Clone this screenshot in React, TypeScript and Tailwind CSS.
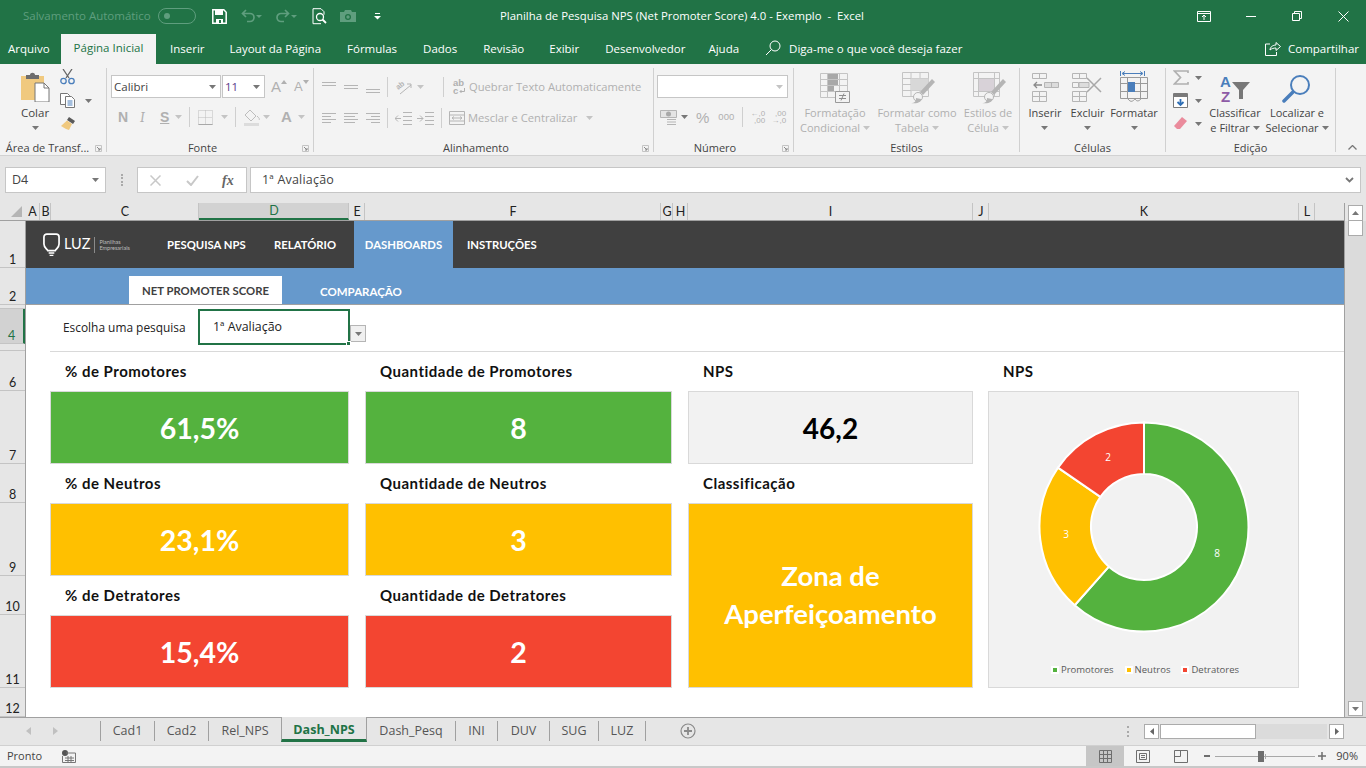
import type { ReactNode } from "react";

const GREEN = "#217346";
const DIM = "#b5b5b5";

function Caret({ color = "#777777", className = "" }: { color?: string; className?: string }) {
  return (
    <svg width="7" height="4" viewBox="0 0 7 4" className={className}>
      <path d="M0 0h7L3.5 4z" fill={color} />
    </svg>
  );
}

function Launcher() {
  return (
    <svg width="7" height="7" viewBox="0 0 7 7" className="shrink-0">
      <path d="M.5.5h6v6h-6z" fill="none" stroke="#c4c4c4" />
      <path d="M2 2l3 3M5 3v2H3" fill="none" stroke="#8a8a8a" />
    </svg>
  );
}

function VSep({ h = 20, className = "" }: { h?: number; className?: string }) {
  return <div className={`w-px bg-[#cfcfcf] shrink-0 ${className}`} style={{ height: h }} />;
}

function Group({
  width,
  label,
  launcher,
  pad = 8,
  children,
}: {
  width: number;
  label: string;
  launcher?: boolean;
  pad?: number;
  children: ReactNode;
}) {
  return (
    <div className="flex flex-col border-r border-[#d0d0d0] shrink-0 mt-[4px]" style={{ width, height: 84 }}>
      <div className="h-[73px] shrink-0 flex">{children}</div>
      <div className="h-[14px] shrink-0 flex items-center px-1">
        <span className="flex-1 text-center text-[11px] text-[#444444] whitespace-nowrap" style={{ paddingRight: launcher ? pad : 0 }}>
          {label}
        </span>
        {launcher && <Launcher />}
      </div>
    </div>
  );
}

function Lines({ rows, color = DIM }: { rows: [number, number, number][]; color?: string }) {
  return (
    <svg width="16" height="14" viewBox="0 0 16 14">
      {rows.map(([y, x1, x2], i) => (
        <path key={i} d={`M${x1} ${y + 0.5}H${x2}`} stroke={color} />
      ))}
    </svg>
  );
}

function BigLabelled({
  width,
  lines,
  icon,
  dim,
  caretInline,
}: {
  width: number;
  lines: string[];
  icon: ReactNode;
  dim?: boolean;
  caretInline?: boolean;
}) {
  const color = dim ? "text-[#b0b0b0]" : "text-[#444444]";
  return (
    <div className="flex flex-col items-center shrink-0" style={{ width }}>
      <div className="h-[33px] shrink-0 flex items-center justify-center">{icon}</div>
      <div className={`text-[11px] leading-[15px] text-center whitespace-nowrap mt-[1px] ${color}`}>
        <div>{lines[0]}</div>
        {lines[1] ? (
          <div className="flex items-center justify-center gap-[3px]">
            {lines[1]}
            {caretInline && <Caret color={dim ? "#c4c4c4" : "#777777"} />}
          </div>
        ) : (
          <div className="h-[15px] flex items-center justify-center">
            <Caret />
          </div>
        )}
      </div>
    </div>
  );
}

function TitleBar() {
  return (
    <div className="h-[35px] flex items-center text-white relative text-[11px] pb-[3px]">
      <span className="ml-[23px] text-[#5f9e7e] text-[11.5px]">Salvamento Automático</span>
      <div className="ml-[7px] w-[38px] h-[16px] rounded-full border border-[#5f9e7e] flex items-center pl-[5px]">
        <div className="w-[6px] h-[6px] rounded-full bg-[#5f9e7e]" />
      </div>
      <svg width="15" height="15" viewBox="0 0 15 15" className="ml-[16px]">
        <path d="M.8.8h11l2.4 2.4v11H.8z" fill="none" stroke="#fff" strokeWidth="1.5" />
        <path d="M3 1h8v5H3zM4 10h7v4H4z" fill="#fff" />
        <path d="M7 11h2v3H7z" fill={GREEN} />
      </svg>
      <svg width="21" height="14" viewBox="0 0 21 14" className="ml-[14px]">
        <path d="M5 1L1.500 4.500 5 8M2 4.500h7a4 4 0 0 1 0 8H6" fill="none" stroke="#5f9e7e" strokeWidth="1.700" />
        <path d="M15 6h6l-3 3z" fill="#5f9e7e" />
      </svg>
      <svg width="21" height="14" viewBox="0 0 21 14" className="ml-[14px]">
        <path d="M9 1l3.500 3.500L9 8M12 4.500H5a4 4 0 0 0 0 8h3" fill="none" stroke="#5f9e7e" strokeWidth="1.700" />
        <path d="M15 6h6l-3 3z" fill="#5f9e7e" />
      </svg>
      <svg width="15" height="17" viewBox="0 0 15 17" className="ml-[15px]">
        <path d="M9 .7H1v15h8M9 .7l3 3v3" fill="none" stroke="#fff" />
        <circle cx="8" cy="9" r="3.500" fill={GREEN} stroke="#fff" strokeWidth="1.300" />
        <path d="M10.500 11.500l3.500 3.500" stroke="#fff" strokeWidth="1.800" />
      </svg>
      <svg width="16" height="12" viewBox="0 0 16 12" className="ml-[13px]">
        <path d="M0 2h4l1-2h6l1 2h4v10H0z" fill="#5f9e7e" />
        <circle cx="8" cy="7" r="3" fill={GREEN} />
        <circle cx="8" cy="7" r="1.700" fill="#5f9e7e" />
      </svg>
      <svg width="7" height="7" viewBox="0 0 7 7" className="ml-[18px]">
        <path d="M1 .5h5" stroke="#fff" />
        <path d="M0 3h7L3.500 6.500z" fill="#fff" />
      </svg>
      <span className="absolute left-[500px] text-[11.35px] whitespace-pre">
        Planilha de Pesquisa NPS (Net Promoter Score) 4.0 - Exemplo  -  Excel
      </span>
      <div className="ml-auto flex items-center">
        <svg width="14" height="11" viewBox="0 0 14 11">
          <path d="M.5 .5h13v10H.5zM.5 2.500h13" fill="none" stroke="#fff" />
          <path d="M7 9V4.500M5 6l2-2 2 2" fill="none" stroke="#fff" />
        </svg>
        <div className="ml-[35px] w-[10px] h-px bg-white" />
        <svg width="10" height="10" viewBox="0 0 10 10" className="ml-[36px]">
          <path d="M.5 2.500h7v7h-7zM2.500 2.500v-2h7v7h-2" fill="none" stroke="#fff" />
        </svg>
        <svg width="11" height="11" viewBox="0 0 11 11" className="ml-[36px] mr-[17px]">
          <path d="M.5 .5l10 10M10.500 .5l-10 10" stroke="#fff" />
        </svg>
      </div>
    </div>
  );
}

function MenuBar() {
  const tabs: [string, number][] = [
    ["Inserir", 14],
    ["Layout da Página", 25],
    ["Fórmulas", 26],
    ["Dados", 26],
    ["Revisão", 26],
    ["Exibir", 25],
    ["Desenvolvedor", 26],
    ["Ajuda", 23],
  ];
  return (
    <div className="h-[29px] flex items-end text-white text-[11.5px]">
      <span className="ml-[8px] w-[53px] h-[24px] leading-[17px]">Arquivo</span>
      <div className="w-[95px] h-[30px] bg-[#f3f3f3] text-[#217346] flex items-center justify-center pb-[2px]">
        Página Inicial
      </div>
      {tabs.map(([t, ml]) => (
        <span key={t} className="h-[24px] leading-[17px] whitespace-nowrap" style={{ marginLeft: ml }}>
          {t}
        </span>
      ))}
      <svg width="16" height="16" viewBox="0 0 16 16" className="ml-[26px] mb-[8px]">
        <circle cx="10" cy="6" r="5" fill="none" stroke="#fff" />
        <path d="M6.500 9.500L1 15" stroke="#fff" />
      </svg>
      <span className="ml-[8px] h-[24px] leading-[17px]">Diga-me o que você deseja fazer</span>
      <div className="ml-auto flex items-center h-[17px] mb-[7px] mr-[7px]">
        <svg width="16" height="15" viewBox="0 0 16 15" className="mr-[7px]">
          <path d="M5 3H.5v11.500h11V11" fill="none" stroke="#fff" />
          <path d="M5 9c0-3 3-5 6-5V1.500l4.500 4-4.500 4V7C9 7 6.500 7.500 5 9z" fill="none" stroke="#fff" />
        </svg>
        <span>Compartilhar</span>
      </div>
    </div>
  );
}

function ClipboardGroup() {
  return (
    <Group width={107} label="Área de Transf..." launcher pad={4}>
      <div className="w-[60px] flex flex-col items-center pl-[10px] pt-[4px]">
        <svg width="30" height="30" viewBox="0 0 30 30" className="shrink-0">
          <path d="M1 4h23v24H1z" fill="#f0c97f" />
          <path d="M6 3h4c0-3 5-3 5 0h4v4H6z" fill="#6d6d6d" />
          <path d="M15 11h9l5 5v14H15z" fill="#fff" stroke="#777" />
          <path d="M24 11v5h5" fill="none" stroke="#777" />
        </svg>
        <span className="text-[11.5px] text-[#444444] mt-[3px] leading-[16px]">Colar</span>
        <Caret className="mt-[5px]" />
      </div>
      <div className="flex flex-col pt-[1px]">
        <svg width="16" height="16" viewBox="0 0 16 16">
          <path d="M3 0l6 9M12 0L6 9" stroke="#666" strokeWidth="1.300" />
          <circle cx="3.500" cy="12" r="2.700" fill="none" stroke="#4a7ebb" strokeWidth="1.300" />
          <circle cx="11.500" cy="12" r="2.700" fill="none" stroke="#4a7ebb" strokeWidth="1.300" />
        </svg>
        <div className="flex items-center mt-[8px]">
          <svg width="16" height="15" viewBox="0 0 16 15">
            <path d="M.5.5h7l2 2v9h-9z" fill="#fff" stroke="#777" />
            <path d="M5.500 3.500h6l3 3v8h-9z" fill="#fff" stroke="#777" />
            <path d="M7.500 8h5M7.500 10h5M7.500 12h5" stroke="#4a7ebb" />
          </svg>
          <Caret className="ml-[9px]" />
        </div>
        <svg width="16" height="15" viewBox="0 0 16 15" className="mt-[8px]">
          <path d="M9 1l6 4-2 3-6-4z" fill="#5a5a5a" />
          <path d="M7 4.500L12 8l-3 6-3-1-5-3z" fill="#f0c97f" />
        </svg>
      </div>
    </Group>
  );
}

function Select({ w, value, color = "#444444" }: { w: number; value: string; color?: string }) {
  return (
    <div
      className="h-[23px] bg-white border border-[#c6c6c6] flex items-center justify-between pl-[2px] pr-[4px] text-[11.500px] shrink-0"
      style={{ width: w, color }}
    >
      <span>{value}</span>
      <Caret />
    </div>
  );
}

function FontGroup() {
  return (
    <Group width={207} label="Fonte" launcher>
      <div className="flex flex-col pl-[4px] pt-[7px]">
        <div className="flex items-center">
          <Select w={110} value="Calibri" />
          <div className="w-px" />
          <Select w={43} value="11" color="#5b3a8a" />
          <span className="ml-[6px] text-[15px] font-medium text-[#b0b0b0] leading-none" style={{ fontFamily: "Liberation Sans" }}>
            A
          </span>
          <svg width="6" height="4" viewBox="0 0 6 4" className="mb-[9px]">
            <path d="M0 4h6L3 0z" fill="#b0b0b0" />
          </svg>
          <span className="ml-[7px] text-[13px] text-[#b0b0b0] leading-none" style={{ fontFamily: "Liberation Sans" }}>
            A
          </span>
          <svg width="6" height="4" viewBox="0 0 6 4" className="mb-[9px]">
            <path d="M0 0h6L3 4z" fill="#b0b0b0" />
          </svg>
        </div>
        <div className="flex items-center h-[20px] mt-[9px] text-[#b0b0b0] text-[14px]" style={{ fontFamily: "Liberation Sans" }}>
          <span className="ml-[7px] w-[10px] font-bold">N</span>
          <span className="ml-[12px] w-[8px] italic font-serif">I</span>
          <span className="ml-[12px] w-[9px] font-bold underline">S</span>
          <Caret color="#c4c4c4" className="ml-[6px]" />
          <VSep className="ml-[7px]" />
          <svg width="15" height="15" viewBox="0 0 15 15" className="ml-[8px]">
            <path d="M.5.5h14v14H.5zM7.500 .5v14M.5 7.500h14" fill="none" stroke="#bcbcbc" strokeDasharray="1 1" />
            <path d="M.5 14.500h14" stroke="#a8a8a8" />
          </svg>
          <Caret color="#c4c4c4" className="ml-[8px]" />
          <VSep className="ml-[7px]" />
          <svg width="18" height="17" viewBox="0 0 18 17" className="ml-[7px]">
            <path d="M7 1l6 6-5 5-6-6z" fill="none" stroke="#bdbdbd" />
            <path d="M14 7c2 2 3 3 2 4" fill="none" stroke="#bdbdbd" />
            <path d="M1 14h15v3H1z" fill="#dcdcdc" />
          </svg>
          <Caret color="#c4c4c4" className="ml-[2px]" />
          <span className="ml-[11px] w-[11px] font-bold text-[15px]">A</span>
          <Caret color="#c4c4c4" className="ml-[6px]" />
        </div>
      </div>
    </Group>
  );
}

function AlignGroup() {
  const l = (a: number, b: number) => [a, 1, b] as [number, number, number];
  return (
    <Group width={340} label="Alinhamento" launcher>
      <div className="flex flex-col pl-[7px] pt-[7px]">
        <div className="flex items-center h-[24px]">
          <div className="w-[22px]"><Lines rows={[l(2, 15), l(5, 15)]} /></div>
          <div className="w-[22px]"><Lines rows={[l(5, 15), l(8, 15)]} /></div>
          <div className="w-[22px]"><Lines rows={[l(9, 15), l(12, 15)]} /></div>
          <VSep />
          <svg width="17" height="16" viewBox="0 0 17 16" className="ml-[7px]">
            <text x="1" y="9" fontSize="7.500" fontWeight="700" fill={DIM} transform="rotate(-40 5 7)" style={{ fontFamily: "Liberation Sans" }}>
              ab
            </text>
            <path d="M5 15l11-9M12 5h4v4" fill="none" stroke={DIM} />
          </svg>
          <Caret color="#c4c4c4" className="ml-[5px]" />
          <VSep className="ml-[19px]" />
          <div className="ml-[9px] w-[14px] text-[9.500px] leading-[8px] font-bold text-[#b0b0b0] shrink-0" style={{ fontFamily: "Liberation Sans" }}>
            <div>ab</div>
            <div className="flex items-center">
              c
              <svg width="6" height="6" viewBox="0 0 6 6" className="ml-[1px]">
                <path d="M5.500 0v3.500H1M2.500 2L1 3.500 2.500 5" fill="none" stroke="#b0b0b0" />
              </svg>
            </div>
          </div>
          <span className="text-[11.200px] ml-[2px] text-[#b0b0b0] whitespace-nowrap">Quebrar Texto Automaticamente</span>
        </div>
        <div className="flex items-center h-[24px] mt-[7px]">
          <div className="w-[22px]"><Lines rows={[l(2, 15), l(5, 10), l(8, 15), l(11, 10)]} /></div>
          <div className="w-[22px]"><Lines rows={[l(2, 15), l(5, 12), l(8, 15), l(11, 12)]} /></div>
          <div className="w-[22px]"><Lines rows={[l(2, 15), [5, 6, 15], l(8, 15), [11, 6, 15]]} /></div>
          <VSep />
          <svg width="17" height="13" viewBox="0 0 17 13" className="ml-[7px]">
            <path d="M8 .5h9M8 4.500h9M8 8.500h9M8 12.500h9M0 6.500h6M3 3.500l-3 3 3 3" fill="none" stroke={DIM} />
          </svg>
          <svg width="17" height="13" viewBox="0 0 17 13" className="ml-[5px]">
            <path d="M8 .5h9M8 4.500h9M8 8.500h9M8 12.500h9M0 6.500h6M3 3.500l3 3-3 3" fill="none" stroke={DIM} />
          </svg>
          <VSep className="ml-[7px]" />
          <svg width="16" height="14" viewBox="0 0 16 14" className="ml-[7px]">
            <path d="M.5.5h15v13H.5zM.5 4h15M.5 10h15M3 7h10M5 5.500L3 7l2 1.500M11 5.500L13 7l-2 1.500" fill="none" stroke={DIM} />
          </svg>
          <span className="ml-[3px] text-[11.200px] text-[#b0b0b0] whitespace-nowrap">Mesclar e Centralizar</span>
          <Caret color="#c4c4c4" className="ml-[9px]" />
        </div>
      </div>
      <div className="flex-1" />
    </Group>
  );
}

function NumberGroup() {
  return (
    <Group width={140} label="Número" launcher pad={10}>
      <div className="flex flex-col pl-[3px] pt-[7px]">
        <div className="w-[131px] h-[23px] bg-white border border-[#c6c6c6] flex items-center justify-end pr-[4px]">
          <Caret color="#c4c4c4" />
        </div>
        <div className="flex items-center h-[20px] mt-[9px] text-[#b0b0b0]">
          <svg width="17" height="15" viewBox="0 0 17 15" className="ml-[3px]">
            <path d="M.5.5h16v7H.5z" fill="#e4e4e4" stroke={DIM} />
            <circle cx="8.500" cy="4" r="2.500" fill="#a8a8a8" />
            <path d="M7 9.500h9M7 12h9M7 14.500h9" stroke={DIM} />
          </svg>
          <Caret className="ml-[4px]" />
          <span className="ml-[8px] text-[15px] leading-none" style={{ fontFamily: "Liberation Sans" }}>%</span>
          <span className="ml-[9px] text-[9.500px] leading-none" style={{ fontFamily: "Liberation Sans" }}>000</span>
          <VSep className="ml-[8px]" />
          <div className="ml-[7px] w-[15px] text-[8px] leading-[7px] text-right" style={{ fontFamily: "Liberation Sans" }}>
            ←,0
            <br />
            ,00
          </div>
          <div className="ml-[6px] w-[15px] text-[8px] leading-[7px] text-right" style={{ fontFamily: "Liberation Sans" }}>
            ,00
            <br />
            →,0
          </div>
        </div>
      </div>
    </Group>
  );
}

function TableIcon({ children }: { children: ReactNode }) {
  return (
    <svg width="36" height="33" viewBox="0 0 36 33">
      <path d="M3.500 1.500h26v24h-26zM3.500 7.500h26M3.500 13.500h26M3.500 19.500h26M12 1.500v24M21 1.500v24" fill="none" stroke="#c4c4c4" />
      {children}
    </svg>
  );
}

function Brush() {
  return (
    <g>
      <path d="M36 11L24 24l-3-3 12-13z" fill="#b5b5b5" />
      <circle cx="19" cy="26" r="4.500" fill="#f3f3f3" stroke="#b5b5b5" />
      <path d="M12 32c4 0 5-2 5-5l5 1c0 3-3 5-10 4z" fill="#b5b5b5" />
    </g>
  );
}

function StylesGroup() {
  return (
    <Group width={226} label="Estilos">
      <div className="flex pl-[6px] pt-[3px]">
        <BigLabelled
          width={70}
          dim
          caretInline
          lines={["Formatação", "Condicional"]}
          icon={
            <svg width="30" height="30" viewBox="0 0 30 30">
              <path d="M.5.5h27v24H.5zM.5 6.500h27M.5 12.500h27M.5 18.500h27M7.500.5v24M19.500 .5v24" fill="none" stroke="#c4c4c4" />
              <path d="M8 1h10v5H8zM8 7h10v5H8zM8 13h6v5H8z" fill="#a8a8a8" />
              <path d="M15.500 18.500h14v11h-14z" fill="#f3f3f3" stroke="#9a9a9a" />
              <path d="M19 22.500h7M19 25.500h7M24 20.500l-3 7" stroke="#8f8f8f" />
            </svg>
          }
        />
        <BigLabelled
          width={94}
          dim
          caretInline
          lines={["Formatar como", "Tabela"]}
          icon={
            <TableIcon>
              <path d="M12 7.500h17.500v12H12z" fill="#d8d8d8" />
              <Brush />
            </TableIcon>
          }
        />
        <BigLabelled
          width={48}
          dim
          caretInline
          lines={["Estilos de", "Célula"]}
          icon={
            <svg width="36" height="33" viewBox="0 0 36 33">
              <path d="M3.500 1.500h26v24h-26zM3.500 7.500h26M8.500 1.500v24M24.500 1.500v24M3.500 20.500h26" fill="none" stroke="#c4c4c4" />
              <path d="M9 8h15v12H9z" fill="#d8d2d8" />
              <Brush />
            </svg>
          }
        />
      </div>
    </Group>
  );
}

function CellsGroup() {
  return (
    <Group width={146} label="Células">
      <div className="flex pl-[3px] pt-[3px]">
        <BigLabelled
          width={44}
          lines={["Inserir"]}
          icon={
            <svg width="27" height="29" viewBox="0 0 27 29">
              <path d="M.5.5h14v5H.5zM7.500 .5v5M.5 18.500h14v10H.5zM.5 23.500h14M7.500 18.500v10" fill="none" stroke="#b5b5b5" />
              <path d="M12.500 9.500h14v5h-14zM19.500 9.500v5" fill="#dcdcdc" stroke="#b5b5b5" />
              <path d="M2 12h8M5 9l-3 3 3 3" fill="none" stroke="#8a8a8a" strokeWidth="1.300" />
            </svg>
          }
        />
        <BigLabelled
          width={41}
          lines={["Excluir"]}
          icon={
            <svg width="31" height="29" viewBox="0 0 31 29">
              <path d="M.5.5h14v5H.5zM7.500 .5v5M.5 18.500h14v10H.5zM.5 23.500h14M7.500 18.500v10M.5 9.500h6v5h-6z" fill="none" stroke="#b5b5b5" />
              <path d="M7 9.500h10v5H7z" fill="#dcdcdc" stroke="#b5b5b5" />
              <path d="M15 5l14 14M29 5L15 19" stroke="#a8a8a8" strokeWidth="1.500" />
            </svg>
          }
        />
        <BigLabelled
          width={52}
          lines={["Formatar"]}
          icon={
            <svg width="29" height="33" viewBox="0 0 29 33">
              <path d="M.5 0v5M24.500 0v5M3 2.500h19" stroke="#4a7ebb" />
              <path d="M5 .5L2 2.500l3 2M20 .5l3 2-3 2" fill="none" stroke="#4a7ebb" />
              <path d="M.5 6.500h27v21H.5zM.5 12.500h27M.5 20.500h27M7.500 6.500v21M20.500 6.500v21" fill="none" stroke="#9a9a9a" />
              <path d="M8 11h7v10H8z" fill="#4a7ebb" />
              <path d="M8 28c3 4 5 2 7 0M15 28c2 3 4 2 6 0" fill="none" stroke="#9a9a9a" />
            </svg>
          }
        />
      </div>
    </Group>
  );
}

function EditGroup() {
  return (
    <Group width={170} label="Edição">
      <div className="flex pl-[7px] pt-[3px]">
        <div className="flex flex-col w-[31px] -mt-[1px]">
          <div className="flex items-center h-[15px]">
            <svg width="16" height="15" viewBox="0 0 16 15">
              <path d="M15 3V1H1.500l6 6.500-6 6.500H15v-2" fill="none" stroke="#b0b0b0" strokeWidth="1.700" />
            </svg>
            <Caret className="ml-[6px]" />
          </div>
          <div className="flex items-center h-[15px] mt-[8px]">
            <svg width="15" height="15" viewBox="0 0 15 15">
              <path d="M.5.5h14v14H.5z" fill="#fff" stroke="#7a7a7a" />
              <path d="M1 1h13v3H1z" fill="#7a7a7a" />
              <path d="M7.500 6v6M4.500 9l3 3 3-3" fill="none" stroke="#2f6fb5" strokeWidth="1.800" />
            </svg>
            <Caret className="ml-[7px]" />
          </div>
          <div className="flex items-center h-[15px] mt-[8px]">
            <svg width="15" height="13" viewBox="0 0 15 13">
              <path d="M9 0l5 4-7 8H4L1 9z" fill="#ea8b9c" />
            </svg>
            <Caret className="ml-[7px]" />
          </div>
        </div>
        <BigLabelled
          width={62}
          caretInline
          lines={["Classificar", "e Filtrar"]}
          icon={
            <svg width="30" height="30" viewBox="0 0 30 30" className="mt-[2px]">
              <text x="0" y="13" fontSize="15" fontWeight="700" fill="#4a7ebb" style={{ fontFamily: "Liberation Sans" }}>A</text>
              <text x="1" y="28" fontSize="15" fontWeight="700" fill="#8e5ba6" style={{ fontFamily: "Liberation Sans" }}>Z</text>
              <path d="M12 8h18l-7 8v9h-4v-9z" fill="#777777" />
            </svg>
          }
        />
        <BigLabelled
          width={62}
          caretInline
          lines={["Localizar e", "Selecionar"]}
          icon={
            <svg width="30" height="30" viewBox="0 0 30 30" className="mt-[2px]">
              <circle cx="18" cy="11" r="9" fill="none" stroke="#4a7ebb" strokeWidth="2" />
              <path d="M11 18L2 27" stroke="#4a7ebb" strokeWidth="3.500" strokeLinecap="round" />
            </svg>
          }
        />
      </div>
    </Group>
  );
}

function Ribbon() {
  return (
    <div className="h-[92px] bg-[#f3f3f3] border-b border-[#d2d2d2] flex shrink-0">
      <ClipboardGroup />
      <FontGroup />
      <AlignGroup />
      <NumberGroup />
      <StylesGroup />
      <CellsGroup />
      <EditGroup />
      <svg width="9" height="5" viewBox="0 0 9 5" className="ml-[12px] mt-[81px]">
        <path d="M.5 4.500l4-4 4 4" fill="none" stroke="#777" strokeWidth="1.300" />
      </svg>
    </div>
  );
}

function FormulaBar() {
  return (
    <div className="h-[47px] bg-[#e6e6e6] flex items-start pt-[11px] shrink-0 text-[12.500px] text-[#444444]">
      <div className="ml-[5px] w-[101px] h-[26px] bg-white border border-[#c6c6c6] flex items-center justify-between pl-[6px] pr-[6px]">
        <span>D4</span>
        <Caret />
      </div>
      <div className="ml-[15px] w-[2px] h-[12px] mt-[7px] border-l-2 border-dotted border-[#aaaaaa]" />
      <div className="ml-[14px] w-[110px] h-[26px] bg-white border border-[#c6c6c6] flex items-center">
        <svg width="11" height="11" viewBox="0 0 11 11" className="ml-[12px]">
          <path d="M.5.5l10 10M10.500 .5l-10 10" stroke="#c8c8c8" strokeWidth="1.500" />
        </svg>
        <svg width="13" height="11" viewBox="0 0 13 11" className="ml-[25px]">
          <path d="M1 6l4 4 7-9" fill="none" stroke="#c8c8c8" strokeWidth="2" />
        </svg>
        <span className="ml-[23px] italic font-bold text-[14px] text-[#666666]" style={{ fontFamily: "Liberation Serif" }}>
          fx
        </span>
      </div>
      <div className="ml-[3px] w-[1111px] h-[26px] bg-white border border-[#c6c6c6] flex items-center justify-between pl-[11px] pr-[6px]">
        <span className="tracking-[0.2px] pt-[1px]">1ª Avaliação</span>
        <svg width="9" height="6" viewBox="0 0 9 6">
          <path d="M1 1l3.500 3.500L8 1" fill="none" stroke="#777" strokeWidth="1.800" />
        </svg>
      </div>
    </div>
  );
}

const COLUMNS: [string, number][] = [
  ["A", 15],
  ["B", 11],
  ["C", 148],
  ["D", 150],
  ["E", 16],
  ["F", 296],
  ["G", 12],
  ["H", 15],
  ["I", 285],
  ["J", 16],
  ["K", 310],
  ["L", 16],
];

function ColumnHeaders() {
  return (
    <div className="h-[18px] flex bg-[#e6e6e6] shrink-0 text-[12.500px] text-[#222222] border-b border-[#a0a0a0]" style={{ fontFamily: "Lato, sans-serif" }}>
      <div className="w-[25px] flex items-end justify-end pr-[3px] pb-[3px]">
        <svg width="11" height="11" viewBox="0 0 11 11">
          <path d="M11 0v11H0z" fill="#b5b5b5" />
        </svg>
      </div>
      {COLUMNS.map(([c, w]) => (
        <div
          key={c}
          className={`flex items-center justify-center pl-[1px] pt-[2px] border-r border-[#c4c4c4] ${c === "D" ? "bg-[#d2d2d2] border-b-2 border-b-[#217346] text-[#217346]" : ""}`}
          style={{ width: w }}
        >
          {c}
        </div>
      ))}
    </div>
  );
}

const ROWS: [string, number][] = [
  ["1", 47],
  ["2", 37],
  ["", 4],
  ["4", 35],
  ["", 7],
  ["6", 40],
  ["7", 73],
  ["8", 39],
  ["9", 73],
  ["10", 39],
  ["11", 73],
  ["12", 29],
];

function RowHeaders() {
  return (
    <div className="w-[26px] bg-[#e6e6e6] border-r border-[#a0a0a0] flex flex-col shrink-0 text-[12.500px] text-[#222222]" style={{ fontFamily: "Lato, sans-serif" }}>
      {ROWS.map(([r, h], i) => (
        <div
          key={i}
          className={`flex items-end justify-center border-b border-[#c4c4c4] leading-[14px] overflow-hidden ${r === "4" ? "bg-[#d2d2d2] text-[#217346] border-r-2 border-r-[#217346]" : ""}`}
          style={{ height: h }}
        >
          {r}
        </div>
      ))}
    </div>
  );
}

function Logo() {
  return (
    <div className="ml-[17px] w-[110px] flex items-center text-white shrink-0 font-normal">
      <svg width="17" height="26" viewBox="0 0 18 26">
        <path d="M4 1.500h10a3 3 0 0 1 3 3V12c0 4-3 5-4 7H5c-1-2-4-3-4-7V4.500a3 3 0 0 1 3-3z" fill="none" stroke="#fff" strokeWidth="1.800" />
        <path d="M6 21.500h6M7 24h4" stroke="#fff" strokeWidth="1.500" />
      </svg>
      <span className="ml-[4px] text-[14.500px] leading-none">LUZ</span>
      <div className="ml-[4px] w-px h-[16px] bg-[#8a8a8a]" />
      <div className="ml-[4px] text-[5.500px] leading-[6px] text-[#bdbdbd]">
        Planilhas
        <br />
        Empresariais
      </div>
    </div>
  );
}

function NavBars() {
  return (
    <div className="text-white font-bold" style={{ fontFamily: "Lato, sans-serif" }}>
      <div className="h-[47px] bg-[#404040] flex items-center text-[11.300px]">
        <Logo />
        <span className="ml-[14px] w-[107px] whitespace-nowrap pt-[1px]">PESQUISA NPS</span>
        <span className="w-[80px] pt-[1px]">RELATÓRIO</span>
        <div className="w-[99px] h-full bg-[#6699cc] flex items-center justify-center pt-[1px]">DASHBOARDS</div>
        <span className="ml-[14px] pt-[1px]">INSTRUÇÕES</span>
      </div>
      <div className="h-[37px] bg-[#6699cc] border-b border-[#a0a0a0] flex items-end text-[11.500px]">
        <div className="ml-[103px] w-[153px] h-[28px] bg-white text-[#404040] text-[11.300px] flex items-center justify-center pt-[2px]">
          NET PROMOTER SCORE
        </div>
        <span className="ml-[38px] mb-[4px]">COMPARAÇÃO</span>
      </div>
    </div>
  );
}

function Donut() {
  const data: [number, string, string, number, number][] = [
    [8, "#54b23e", "8", 73, 27],
    [3, "#ffc000", "3", -78, 8],
    [2, "#f34531", "2", -36, -69],
  ];
  const total = 13;
  let angle = 0;
  const pt = (a: number, r: number) => {
    const t = (a - 90) * (Math.PI / 180);
    return `${(110 + r * Math.cos(t)).toFixed(2)} ${(110 + r * Math.sin(t)).toFixed(2)}`;
  };
  return (
    <svg width="220" height="220" viewBox="0 0 220 220" className="shrink-0">
      {data.map(([v, color, label, lx, ly]) => {
        const a0 = angle;
        const a1 = angle + (v / total) * 360;
        angle = a1;
        const large = a1 - a0 > 180 ? 1 : 0;
        const d = `M${pt(a0, 104.500)}A104.500 104.500 0 ${large} 1 ${pt(a1, 104.500)}L${pt(a1, 53)}A53 53 0 ${large} 0 ${pt(a0, 53)}Z`;
        return (
          <g key={label}>
            <path d={d} fill={color} stroke="#ffffff" strokeWidth="2" />
            <text x={110 + lx} y={110 + ly + 3} fontSize="10" fill="#ffffff" textAnchor="middle" style={{ fontFamily: "Open Sans, sans-serif" }}>
              {label}
            </text>
          </g>
        );
      })}
    </svg>
  );
}

function Legend() {
  const items: [string, string][] = [
    ["Promotores", "bg-[#54b23e]"],
    ["Neutros", "bg-[#ffc000]"],
    ["Detratores", "bg-[#f34531]"],
  ];
  return (
    <div className="flex items-center justify-center gap-[11px] text-[9.500px] text-[#595959]">
      {items.map(([t, c]) => (
        <div key={t} className="flex items-center gap-[2px]">
          <div className="w-[8px] h-[8px] bg-white flex items-center justify-center">
            <div className={`w-[4px] h-[4px] ${c}`} />
          </div>
          <span>{t}</span>
        </div>
      ))}
    </div>
  );
}

function Card({ value, color }: { value: string; color: string }) {
  return (
    <div className={`${color} border border-[#d9d9d9] flex items-center justify-center text-white font-bold text-[28.500px] pt-[1px]`}>
      {value}
    </div>
  );
}

function Title({ text, className = "" }: { text: string; className?: string }) {
  return (
    <div className={`flex items-center pl-[15px] text-[15px] tracking-[0.5px] font-bold text-[#111111] ${className}`}>
      {text}
    </div>
  );
}

function Dashboard() {
  return (
    <div className="flex-1 bg-white flex flex-col min-w-0">
      <NavBars />
      <div className="h-[47px] ml-[24px] border-b border-[#d9d9d9] flex items-start shrink-0">
        <span className="ml-[13px] mt-[14px] text-[11.900px] text-[#222222] w-[135px] whitespace-nowrap">Escolha uma pesquisa</span>
        <div className="mt-[4px] w-[152px] h-[36px] border-2 border-[#217346] flex items-center pl-[13px] text-[12.400px] text-[#222222] relative">
          <span>1ª Avaliação</span>
          <div className="absolute right-[-3px] bottom-[-3px] w-[5px] h-[5px] bg-[#217346] border border-white" />
        </div>
        <div className="mt-[20px] w-[16px] h-[17px] bg-[#f0f0f0] border border-[#b5b5b5] flex items-center justify-center">
          <Caret />
        </div>
      </div>
      <div
        className="ml-[24px] grid grid-cols-[299px_307px_285px_311px] grid-rows-[39px_73px_39px_73px_39px_73px] gap-x-[16px]"
        style={{ fontFamily: "Lato, sans-serif" }}
      >
        <Title text="% de Promotores" />
        <Title text="Quantidade de Promotores" />
        <Title text="NPS" />
        <Title text="NPS" className="-ml-px" />
        <Card value="61,5%" color="bg-[#54b23e]" />
        <Card value="8" color="bg-[#54b23e]" />
        <div className="bg-[#f2f2f2] border border-[#d9d9d9] flex items-center justify-center font-bold text-[28px] text-black pt-[1px]">
          46,2
        </div>
        <div className="row-span-5 w-[311px] -ml-px bg-[#f2f2f2] border border-[#d9d9d9] flex flex-col items-center pt-[25px]" style={{ fontFamily: "Open Sans, sans-serif" }}>
          <Donut />
          <div className="mt-[26px] ml-[3px]">
            <Legend />
          </div>
        </div>
        <Title text="% de Neutros" />
        <Title text="Quantidade de Neutros" />
        <Title text="Classificação" />
        <Card value="23,1%" color="bg-[#ffc000]" />
        <Card value="3" color="bg-[#ffc000]" />
        <div className="row-span-3 bg-[#ffc000] border border-[#d9d9d9] flex items-center justify-center text-center text-white font-bold text-[27.500px] leading-[38px] pb-[1px]">
          <div>
            Zona de
            <br />
            Aperfeiçoamento
          </div>
        </div>
        <Title text="% de Detratores" />
        <Title text="Quantidade de Detratores" />
        <Card value="15,4%" color="bg-[#f34531]" />
        <Card value="2" color="bg-[#f34531]" />
      </div>
    </div>
  );
}

function VScrollbar() {
  return (
    <div className="w-[21px] bg-[#dbdbdb] flex flex-col items-center pb-[1px] shrink-0">
      <div className="w-full h-[18px] bg-[#e6e6e6] flex justify-center items-end shrink-0">
        <div className="w-[15px] h-[16px] bg-white border border-[#ababab] flex items-center justify-center">
          <svg width="7" height="4" viewBox="0 0 7 4">
            <path d="M0 4h7L3.500 0z" fill="#777" />
          </svg>
        </div>
      </div>
      <div className="w-[15px] h-[16px] bg-white border border-[#ababab] -mt-px shrink-0" />
      <div className="flex-1" />
      <div className="w-[15px] h-[15px] bg-white border border-[#ababab] flex items-center justify-center">
        <Caret />
      </div>
    </div>
  );
}

function SheetTabs() {
  const before: [string, number][] = [
    ["Cad1", 54],
    ["Cad2", 54],
    ["Rel_NPS", 73],
  ];
  const after: [string, number][] = [
    ["Dash_Pesq", 88],
    ["INI", 42],
    ["DUV", 52],
    ["SUG", 49],
    ["LUZ", 47],
  ];
  return (
    <div className="h-[28px] bg-[#e6e6e6] flex items-start border-t border-[#a0a0a0] shrink-0 text-[12.500px] text-[#555555]">
      <div className="w-[100px] h-[20px] mt-[3px] flex items-center pl-[26px] gap-[22px] shrink-0">
        <svg width="5" height="8" viewBox="0 0 5 8"><path d="M5 0v8L0 4z" fill="#c0c0c0" /></svg>
        <svg width="5" height="8" viewBox="0 0 5 8"><path d="M0 0v8l5-4z" fill="#c0c0c0" /></svg>
      </div>
      {before.map(([t, w]) => (
        <div key={t} className="h-[20px] mt-[3px] border-l border-[#a0a0a0] flex items-center justify-center shrink-0" style={{ width: w }}>
          {t}
        </div>
      ))}
      <div className="w-[86px] h-[25px] -mt-px bg-[#e6e6e6] border-x border-[#a0a0a0] border-b-[3px] border-b-[#217346] flex items-center justify-center font-bold text-[#217346] shrink-0 pt-[4px]">
        Dash_NPS
      </div>
      {after.map(([t, w], i) => (
        <div key={t} className={`h-[20px] mt-[3px] flex items-center justify-center shrink-0 border-[#a0a0a0] ${i === 0 ? "" : "border-l"}`} style={{ width: w }}>
          {t}
        </div>
      ))}
      <div className="h-[20px] mt-[3px] border-l border-[#a0a0a0] shrink-0" />
      <svg width="16" height="16" viewBox="0 0 16 16" className="ml-[34px] mt-[5px]">
        <circle cx="8" cy="8" r="7" fill="none" stroke="#8a8a8a" strokeWidth="1.200" />
        <path d="M8 4v8M4 8h8" stroke="#8a8a8a" strokeWidth="1.800" />
      </svg>
      <div className="ml-auto flex items-center mt-[6px] mr-[22px]">
        <div className="w-[2px] h-[11px] mr-[15px] border-l-2 border-dotted border-[#aaaaaa]" />
        <div className="w-[15px] h-[15px] bg-white border border-[#ababab] flex items-center justify-center">
          <svg width="4" height="7" viewBox="0 0 4 7"><path d="M4 0v7L0 3.500z" fill="#666" /></svg>
        </div>
        <div className="w-[167px] h-[15px] bg-[#dbdbdb] ml-px flex">
          <div className="w-[96px] h-full bg-white border border-[#ababab]" />
        </div>
        <div className="w-[15px] h-[15px] ml-[2px] bg-white border border-[#ababab] flex items-center justify-center">
          <svg width="4" height="7" viewBox="0 0 4 7"><path d="M0 0v7l4-3.500z" fill="#666" /></svg>
        </div>
      </div>
    </div>
  );
}

function StatusBar() {
  return (
    <div className="h-[23px] bg-[#f3f3f3] border-t border-[#d0d0d0] flex items-center text-[11px] text-[#444444] shrink-0 border-b-2 border-b-[#c8c8c8]">
      <span className="ml-[7px]">Pronto</span>
      <svg width="14" height="13" viewBox="0 0 14 13" className="ml-[20px]">
        <circle cx="3" cy="3" r="3" fill="#555" />
        <path d="M4 3h9.500v9.500H.5V6" fill="none" stroke="#777" />
        <path d="M3 8h9M3 10.500h9M6 6v6M9 6v6" stroke="#777" />
      </svg>
      <div className="ml-auto h-full flex items-center">
        <div className="w-[38px] h-full bg-[#c6c6c6] flex items-center justify-center">
          <svg width="13" height="13" viewBox="0 0 13 13">
            <path d="M.5.5h12v12H.5zM.5 4.500h12M.5 8.500h12M4.500 .5v12M8.500 .5v12" fill="none" stroke="#6e6e6e" />
          </svg>
        </div>
        <svg width="14" height="13" viewBox="0 0 14 13" className="ml-[12px]">
          <path d="M.5.5h13v12H.5z" fill="none" stroke="#6e6e6e" />
          <path d="M3.500 3.500h7v6h-7zM5 5.500h4M5 7.500h4" fill="none" stroke="#6e6e6e" />
        </svg>
        <svg width="14" height="13" viewBox="0 0 14 13" className="ml-[24px]">
          <path d="M.5.5h13v12H.5zM6.500 .5v6H.5" fill="none" stroke="#6e6e6e" />
        </svg>
        <div className="ml-[16px] w-[6px] h-[2px] bg-[#6e6e6e]" />
        <div className="ml-[5px] w-[100px] h-px bg-[#a8a8a8] relative">
          <div className="absolute left-[43px] -top-[5px] w-[6px] h-[11px] bg-[#6e6e6e]" />
          <div className="absolute left-[50px] -top-[2px] w-px h-[5px] bg-[#a8a8a8]" />
        </div>
        <svg width="8" height="8" viewBox="0 0 8 8" className="ml-[3px]">
          <path d="M4 0v8M0 4h8" stroke="#6e6e6e" strokeWidth="1.500" />
        </svg>
        <span className="ml-[10px] mr-[8px] text-[11px]">90%</span>
      </div>
    </div>
  );
}

export default function App() {
  return (
    <div
      className="w-[1366px] h-[768px] flex flex-col overflow-hidden bg-[#217346]"
      style={{ fontFamily: '"Open Sans", sans-serif' }}
    >
      <TitleBar />
      <MenuBar />
      <Ribbon />
      <FormulaBar />
      <div className="flex flex-1 min-h-0">
        <div className="flex-1 flex flex-col min-w-0 border-r border-[#a0a0a0]">
          <ColumnHeaders />
          <div className="flex flex-1 min-h-0">
            <RowHeaders />
            <Dashboard />
          </div>
        </div>
        <VScrollbar />
      </div>
      <SheetTabs />
      <StatusBar />
    </div>
  );
}
